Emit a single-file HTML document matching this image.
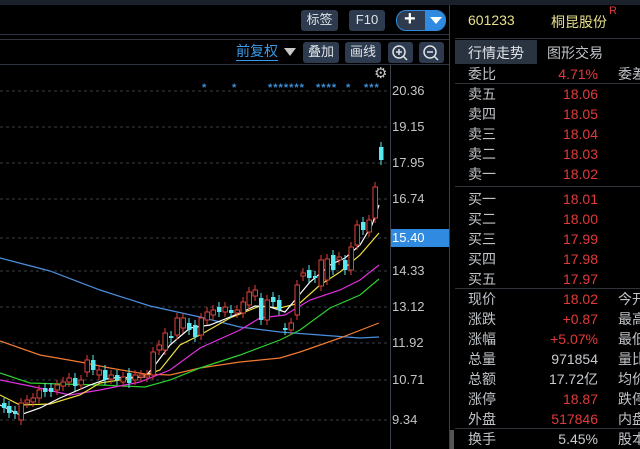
<!DOCTYPE html>
<html><head><meta charset="utf-8"><style>
*{margin:0;padding:0;box-sizing:border-box}
body{width:640px;height:449px;background:#000;position:relative;overflow:hidden;font-family:"Liberation Sans","Noto Sans CJK SC",sans-serif;color:#c8c8c8}
.a{position:absolute;white-space:nowrap}
.btn{position:absolute;background:#2e3b4e;color:#dfe4ea;font-size:13px;border-radius:3px;text-align:center;line-height:20px;height:21px}
.ax{position:absolute;left:392px;font-size:13px;color:#c4c4c4}
.row{position:absolute;left:455px;width:185px;height:20px;font-size:14px;line-height:20px;white-space:nowrap;overflow:hidden}
.row span{white-space:nowrap}
.row .l{position:absolute;left:13px;color:#c0c4c8}
.row .v{position:absolute;right:42px;color:#e23a3a;text-align:right}
.row .w{position:absolute;left:163px;color:#c0c4c8}
.sep{position:absolute;left:455px;width:185px;height:1px;background:#30343a}
.st{position:absolute;top:82px;font-size:11px;color:#3a8fd8;font-weight:bold;letter-spacing:1px}
</style></head><body>
<div class="a" style="left:0;top:0;width:640px;height:5px;background:#1a212b"></div>
<div class="a" style="left:0;top:34px;width:450px;height:1px;background:#2e3540"></div>
<div class="a" style="left:0;top:39px;width:450px;height:1px;background:#2e3540"></div>
<div class="a" style="left:0;top:64px;width:450px;height:1px;background:#2e3540"></div>
<div class="a" style="left:449px;top:5px;width:1px;height:444px;background:#3a4048"></div>
<div class="a" style="left:390px;top:64px;width:1px;height:385px;background:#3a4048"></div>
<div class="btn" style="left:301px;top:10px;width:37px">标签</div>
<div class="btn" style="left:349px;top:10px;width:36px">F10</div>
<div class="a" style="left:396px;top:10px;width:50px;height:21px;border-radius:10px;background:#2e3b4e;border:1px solid #2f8ae0;overflow:hidden">
<div class="a" style="left:28px;top:0;width:22px;height:21px;background:#2f8ae0"></div>
<div class="a" style="left:7px;top:-3px;color:#fff;font-size:20px;font-weight:bold">+</div>
<div class="a" style="left:33px;top:6px;width:0;height:0;border-left:6px solid transparent;border-right:6px solid transparent;border-top:7px solid #fff"></div></div>
<div class="a" style="left:236px;top:43px;font-size:14px;color:#3a9ae8;border-bottom:1px solid #3a9ae8;line-height:17px">前复权</div>
<div class="a" style="left:284px;top:48px;width:0;height:0;border-left:6px solid transparent;border-right:6px solid transparent;border-top:8px solid #c8c8c8"></div>
<div class="btn" style="left:303px;top:42px;width:36px">叠加</div>
<div class="btn" style="left:345px;top:42px;width:36px">画线</div>
<div class="btn" style="left:388px;top:42px;width:25px"><svg width="25" height="21"><circle cx="11" cy="10" r="6" fill="none" stroke="#dfe4ea" stroke-width="1.5"/><path d="M8 10h6M11 7v6M15 14l4 4" stroke="#dfe4ea" stroke-width="1.5"/></svg></div>
<div class="btn" style="left:419px;top:42px;width:25px"><svg width="25" height="21"><circle cx="11" cy="10" r="6" fill="none" stroke="#dfe4ea" stroke-width="1.5"/><path d="M8 10h6M15 14l4 4" stroke="#dfe4ea" stroke-width="1.5"/></svg></div>
<div class="a" style="left:374px;top:64px;font-size:15px;color:#c8c8c8">⚙</div>
<span class="st" style="left:202px">*</span>
<span class="st" style="left:232px">*</span>
<span class="st" style="left:268px">*******</span>
<span class="st" style="left:316px">****</span>
<span class="st" style="left:346px">*</span>
<span class="st" style="left:364px">***</span>
<svg class="a" style="left:0;top:0" width="390" height="449">
<g stroke="#3a3f46" stroke-dasharray="3,3" stroke-width="1">
<line x1="0" y1="91" x2="390" y2="91"/><line x1="0" y1="127" x2="390" y2="127"/><line x1="0" y1="163" x2="390" y2="163"/><line x1="0" y1="199" x2="390" y2="199"/><line x1="0" y1="238" x2="390" y2="238"/><line x1="0" y1="271" x2="390" y2="271"/><line x1="0" y1="307" x2="390" y2="307"/><line x1="0" y1="343" x2="390" y2="343"/><line x1="0" y1="380" x2="390" y2="380"/><line x1="0" y1="420" x2="390" y2="420"/></g>
<g fill="none" stroke-width="1.2">
<polyline stroke="#4a8fe0" points="0,258 50,271 100,290 150,306 200,317 240,327 280,332 320,335 360,338 379,337"/>
<polyline stroke="#f07a30" points="0,341 40,355 80,362 110,368 145,374 170,375 200,368 240,362 280,358 300,352 340,338 379,323"/>
<polyline stroke="#30d030" points="0,373 30,383 60,384 100,385 145,387 170,380 200,368 240,355 280,340 300,330 330,308 360,295 379,279"/>
<polyline stroke="#e030e0" points="0,380 30,386 70,395 100,390 140,382 170,370 200,348 240,330 260,318 285,315 310,300 340,290 360,280 379,265"/>
<polyline stroke="#f0e040" points="0,395 20,405 50,404 80,395 100,383 140,377 160,370 180,345 200,335 230,318 260,306 280,308 300,303 320,285 340,272 360,255 379,233"/>
<polyline stroke="#ffffff" points="0,405 20,415 40,408 60,398 90,385 110,378 145,377 155,365 170,345 190,328 210,325 240,313 255,306 270,307 285,312 295,300 310,282 330,265 345,258 360,245 372,225 379,205"/>
</g>
<g id="c"></g>
</svg>
<script>
var d=[[2,403,408,0],[7,406,413,0],[13,411,414,0],[19,420,403,1],[25,403,400,1],[31,402,398,1],[37,398,390,1],[43,388,392,0],[49,388,392,0],[55,390,385,1],[61,386,382,1],[67,382,378,1],[73,378,386,0],[79,385,380,1],[85,372,360,1],[91,360,370,0],[97,375,370,1],[103,370,380,0],[109,379,375,1],[115,375,380,0],[121,382,377,1],[127,373,383,0],[133,380,375,1],[139,377,375,1],[145,377,375,1],[151,375,352,1],[157,350,345,1],[163,350,333,1],[169,336,338,0],[175,335,318,1],[181,328,318,1],[187,323,330,0],[193,325,337,0],[199,335,318,1],[205,320,312,1],[211,315,310,1],[217,307,312,0],[223,312,307,1],[229,310,313,0],[235,313,310,1],[241,313,302,1],[247,305,292,1],[253,296,290,1],[259,298,320,0],[265,320,300,1],[271,297,302,0],[277,300,310,0],[283,328,330,0],[289,330,323,1],[295,315,285,1],[301,276,273,1],[307,270,278,0],[313,276,278,0],[319,286,260,1],[325,280,259,1],[331,255,270,0],[337,260,257,1],[343,260,270,0],[349,270,247,1],[355,245,225,1],[361,222,230,0],[367,232,220,1],[373,218,187,1],[379,147,160,0]];
var s='';d.forEach(function(c){var t=Math.min(c[1],c[2]),b=Math.max(c[1],c[2]),col=c[3]?'#e0403a':'#5ae8f0';s+='<line x1="'+(c[0]+2)+'" y1="'+(t-5)+'" x2="'+(c[0]+2)+'" y2="'+(b+5)+'" stroke="'+col+'"/>';s+='<rect x="'+c[0]+'" y="'+t+'" width="4.5" height="'+Math.max(1,b-t)+'" '+(c[3]?'fill="#000" stroke="'+col+'"':'fill="'+col+'"')+'/>';});document.getElementById('c').innerHTML=s;
</script>
<div class="ax" style="top:83px">20.36</div><div class="ax" style="top:119px">19.15</div><div class="ax" style="top:155px">17.95</div><div class="ax" style="top:191px">16.74</div>
<div class="a" style="left:391px;top:229px;width:58px;height:18px;background:#2f8ae0"></div><div class="ax" style="top:230px;color:#fff">15.40</div>
<div class="ax" style="top:263px">14.33</div><div class="ax" style="top:299px">13.12</div><div class="ax" style="top:335px">11.92</div><div class="ax" style="top:372px">10.71</div><div class="ax" style="top:412px">9.34</div>
<div class="a" style="left:450px;top:430px;width:4px;height:19px;background:#555"></div>
<div class="a" style="left:468px;top:12px;font-size:14px;color:#e6e08a">601233</div>
<div class="a" style="left:551px;top:12px;font-size:14px;color:#e6e08a">桐昆股份</div>
<div class="a" style="left:609px;top:5px;font-size:11px;color:#e23a3a">R</div>
<div class="a" style="left:455px;top:38px;width:185px;height:1px;background:#30343a"></div>
<div class="a" style="left:455px;top:40px;width:82px;height:24px;background:#2a3340"></div>
<div class="a" style="left:468px;top:43px;font-size:14px;color:#e0e4e8">行情走势</div>
<div class="a" style="left:547px;top:43px;font-size:14px;color:#c0c4c8">图形交易</div>
<div class="row" style="top:64px"><span class="l">委比</span><span class="v">4.71%</span><span class="w">委差</span></div>
<div class="sep" style="top:83px"></div>
<div class="row" style="top:84px"><span class="l">卖五</span><span class="v">18.06</span></div>
<div class="row" style="top:104px"><span class="l">卖四</span><span class="v">18.05</span></div>
<div class="row" style="top:124px"><span class="l">卖三</span><span class="v">18.04</span></div>
<div class="row" style="top:144px"><span class="l">卖二</span><span class="v">18.03</span></div>
<div class="row" style="top:164px"><span class="l">卖一</span><span class="v">18.02</span></div>
<div class="sep" style="top:186px"></div>
<div class="row" style="top:189px"><span class="l">买一</span><span class="v">18.01</span></div>
<div class="row" style="top:209px"><span class="l">买二</span><span class="v">18.00</span></div>
<div class="row" style="top:229px"><span class="l">买三</span><span class="v">17.99</span></div>
<div class="row" style="top:249px"><span class="l">买四</span><span class="v">17.98</span></div>
<div class="row" style="top:269px"><span class="l">买五</span><span class="v">17.97</span></div>
<div class="sep" style="top:288px"></div>
<div class="row" style="top:289px"><span class="l">现价</span><span class="v">18.02</span><span class="w">今开</span></div>
<div class="row" style="top:309px"><span class="l">涨跌</span><span class="v">+0.87</span><span class="w">最高</span></div>
<div class="row" style="top:329px"><span class="l">涨幅</span><span class="v">+5.07%</span><span class="w">最低</span></div>
<div class="row" style="top:349px"><span class="l">总量</span><span class="v" style="color:#c8ccd0">971854</span><span class="w">量比</span></div>
<div class="row" style="top:369px"><span class="l">总额</span><span class="v" style="color:#c8ccd0">17.72亿</span><span class="w">均价</span></div>
<div class="row" style="top:389px"><span class="l">涨停</span><span class="v">18.87</span><span class="w">跌停</span></div>
<div class="row" style="top:409px"><span class="l">外盘</span><span class="v">517846</span><span class="w">内盘</span></div>
<div class="sep" style="top:428px"></div>
<div class="row" style="top:429px"><span class="l">换手</span><span class="v" style="color:#c8ccd0">5.45%</span><span class="w">股本</span></div>
</body></html>
